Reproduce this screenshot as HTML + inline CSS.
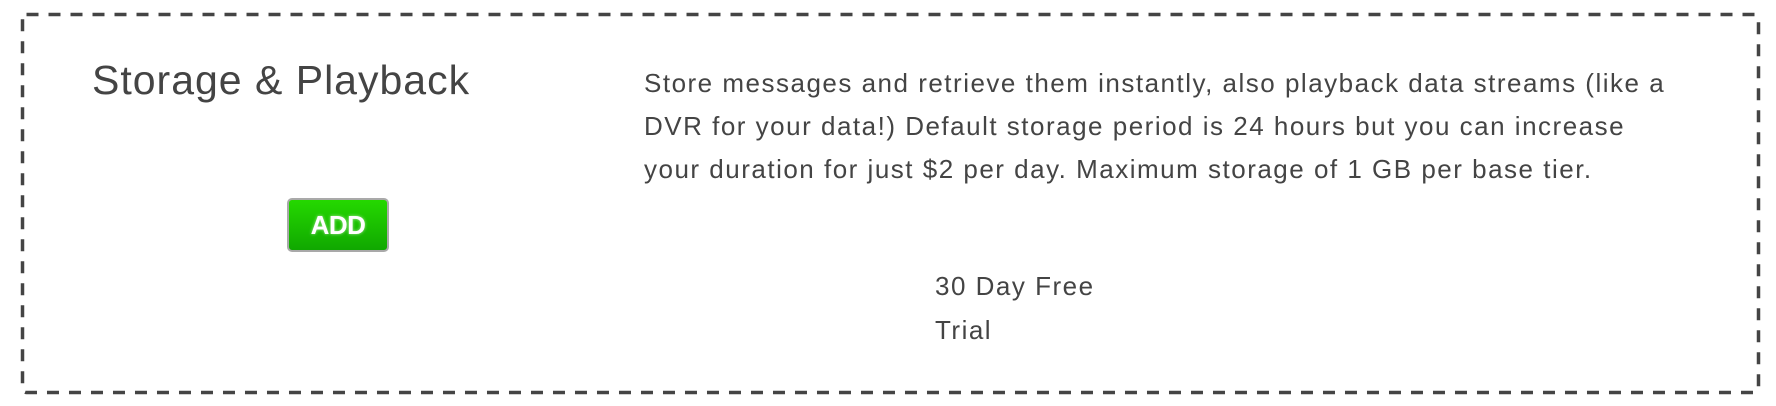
<!DOCTYPE html>
<html><head><meta charset="utf-8">
<style>
html,body{margin:0;padding:0;background:#fff;}
body{width:1776px;height:406px;position:relative;overflow:hidden;font-family:"Liberation Sans",sans-serif;color:#444;}
svg.b{position:absolute;left:0;top:0;}
.title{position:absolute;left:92px;top:57px;font-size:41px;color:#444;white-space:nowrap;letter-spacing:1px;}
.btn{position:absolute;left:287px;top:198px;width:102px;height:54px;border:2px solid #a9a9a9;border-radius:5px;background:linear-gradient(#25d800,#10a800);box-sizing:border-box;color:#fff;font-weight:bold;font-size:26px;text-align:center;line-height:50px;text-shadow:0 0 3px rgba(255,255,255,.6);letter-spacing:-0.5px;}
.desc{position:absolute;left:644px;top:62px;width:1110px;font-size:26px;letter-spacing:1.5px;line-height:43px;color:#444;white-space:nowrap;}
.trial{position:absolute;left:935px;top:264px;font-size:26px;letter-spacing:1.5px;line-height:44px;color:#444;}
</style></head><body>
<svg class="b" width="1776" height="406"><rect x="22.5" y="14.5" width="1736" height="378" rx="4" fill="none" stroke="#444" stroke-width="3.5" stroke-dasharray="12 10"/></svg>
<div class="title">Storage &amp; Playback</div>
<div class="btn">ADD</div>
<div class="desc">Store messages and retrieve them instantly, also playback data streams (like a<br>DVR for your data!) Default storage period is 24 hours but you can increase<br>your duration for just $2 per day. Maximum storage of 1 GB per base tier.</div>
<div class="trial">30 Day Free<br>Trial</div>
</body></html>
